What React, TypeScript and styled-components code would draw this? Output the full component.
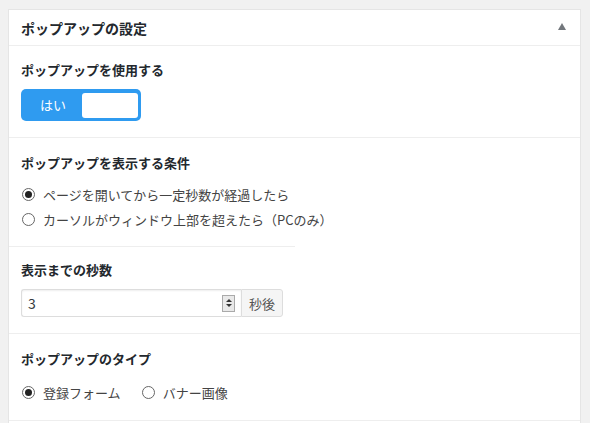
import styled, { createGlobalStyle } from "styled-components";

const GlobalStyle = createGlobalStyle`
  html, body {
    margin: 0;
    padding: 0;
    background: #f1f1f1;
  }
  body {
    font-family: "Noto Sans CJK JP", "Liberation Sans", sans-serif;
    color: #444;
    font-size: 13px;
  }
`;

const Page = styled.div`
  padding: 9px 9px 0 8px;
`;

const Panel = styled.div`
  background: #fff;
  border: 1px solid #e5e5e5;
  border-bottom: none;
  width: 571px;
  padding-bottom: 20px;
`;

const PanelHeader = styled.div`
  height: 35px;
  border-bottom: 1px solid #eee;
  display: flex;
  align-items: center;
  justify-content: space-between;
  padding: 0 14px 0 12px;
`;

const Title = styled.h2`
  margin: 0;
  font-size: 14px;
  font-weight: 700;
  color: #23282d;
  line-height: 20px;
`;

const ToggleArrow = styled.span`
  width: 0;
  height: 0;
  border-left: 4.5px solid transparent;
  border-right: 4.5px solid transparent;
  border-bottom: 7px solid #72777c;
  margin-top: -2px;
`;

const Section = styled.div<{ $pt?: number; $pb?: number; $flat?: boolean }>`
  padding: ${(p) => p.$pt ?? 14}px 12px ${(p) => p.$pb ?? 14}px;
  border-bottom: ${(p) => (p.$flat ? "none" : "1px solid #eee")};
`;

const Group = styled.div`
  border-bottom: 1px solid #eee;
`;

const SubDivider = styled.div`
  width: 50%;
  height: 1px;
  background: #eee;
`;

const Label = styled.div<{ $gap?: number }>`
  font-size: 13px;
  font-weight: 700;
  color: #23282d;
  line-height: 20px;
  margin-bottom: ${(p) => p.$gap ?? 10}px;
`;

const Switch = styled.div`
  display: flex;
  align-items: center;
  width: 120px;
  height: 32px;
  box-sizing: border-box;
  padding: 3px;
  border-radius: 5px;
  background: #2f9bf0;
`;

const SwitchLabel = styled.span`
  width: 58px;
  text-align: center;
  color: #fff;
  font-size: 13px;
  line-height: 20px;
`;

const SwitchKnob = styled.span`
  width: 56px;
  height: 25px;
  background: #fff;
  border-radius: 3px;
`;

const RadioList = styled.div<{ $row?: boolean }>`
  display: flex;
  flex-direction: ${(p) => (p.$row ? "row" : "column")};
  gap: ${(p) => (p.$row ? "20px" : "0")};
`;

const RadioItem = styled.label`
  display: flex;
  align-items: center;
  gap: 8px;
  line-height: 25px;
  font-size: 13px;
  color: #444;
  padding-left: 1px;
`;

const RadioCircle = styled.span<{ $checked?: boolean }>`
  width: 13px;
  height: 13px;
  box-sizing: border-box;
  border: 1px solid #666;
  border-radius: 50%;
  background: #fff;
  display: flex;
  align-items: center;
  justify-content: center;
  &::after {
    content: "";
    display: ${(p) => (p.$checked ? "block" : "none")};
    width: 7px;
    height: 7px;
    border-radius: 50%;
    background: #222;
  }
`;

const InputGroup = styled.div`
  display: flex;
  width: 262px;
  height: 28px;
`;

const NumberBox = styled.div`
  flex: 1;
  display: flex;
  align-items: center;
  justify-content: space-between;
  border: 1px solid #ddd;
  border-right: none;
  border-radius: 3px 0 0 3px;
  box-shadow: inset 0 1px 2px rgba(0, 0, 0, 0.07);
  padding: 0 6px 0 6px;
  font-size: 14px;
  color: #32373c;
`;

const Spinner = styled.span`
  width: 13px;
  height: 17px;
  box-sizing: border-box;
  border: 1px solid #aaa;
  background: #e9e9e9;
  display: flex;
  flex-direction: column;
  align-items: center;
  justify-content: space-around;
  padding: 2px 0;
`;

const Tri = styled.span<{ $down?: boolean }>`
  width: 0;
  height: 0;
  border-left: 3px solid transparent;
  border-right: 3px solid transparent;
  ${(p) =>
    p.$down ? "border-top: 3px solid #333;" : "border-bottom: 3px solid #333;"}
`;

const Suffix = styled.span`
  width: 40px;
  border: 1px solid #ddd;
  border-radius: 0 3px 3px 0;
  background: #f5f5f5;
  display: flex;
  align-items: center;
  justify-content: center;
  font-size: 13px;
  color: #555;
`;

export default function App() {
  return (
    <Page>
      <GlobalStyle />
      <Panel>
        <PanelHeader>
          <Title>ポップアップの設定</Title>
          <ToggleArrow />
        </PanelHeader>

        <Section $pb={16}>
          <Label $gap={9}>ポップアップを使用する</Label>
          <Switch>
            <SwitchLabel>はい</SwitchLabel>
            <SwitchKnob />
          </Switch>
        </Section>

        <Group>
          <Section $pt={15} $flat>
            <Label $gap={9}>ポップアップを表示する条件</Label>
            <RadioList>
              <RadioItem>
                <RadioCircle $checked />
                ページを開いてから一定秒数が経過したら
              </RadioItem>
              <RadioItem>
                <RadioCircle />
                カーソルがウィンドウ上部を超えたら（PCのみ）
              </RadioItem>
            </RadioList>
          </Section>
          <SubDivider />
          <Section $pt={13} $pb={16} $flat>
            <Label $gap={9}>表示までの秒数</Label>
            <InputGroup>
              <NumberBox>
                3
                <Spinner>
                  <Tri />
                  <Tri $down />
                </Spinner>
              </NumberBox>
              <Suffix>秒後</Suffix>
            </InputGroup>
          </Section>
        </Group>

        <Section $pt={15} $pb={15}>
          <Label $gap={11}>ポップアップのタイプ</Label>
          <RadioList $row>
            <RadioItem>
              <RadioCircle $checked />
              登録フォーム
            </RadioItem>
            <RadioItem>
              <RadioCircle />
              バナー画像
            </RadioItem>
          </RadioList>
        </Section>
      </Panel>
    </Page>
  );
}
